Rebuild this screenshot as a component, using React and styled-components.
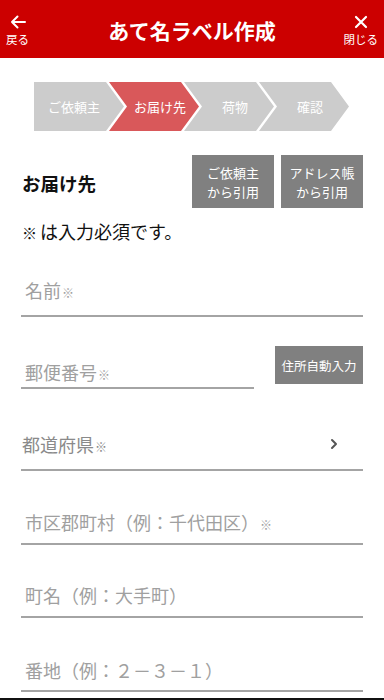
import React from "react";
import styled, { createGlobalStyle } from "styled-components";

const Global = createGlobalStyle`
  html, body { margin: 0; padding: 0; background: #fff; }
  body { font-family: "Noto Sans CJK JP", "Noto Sans", sans-serif; }
  * { box-sizing: border-box; }
`;

const Page = styled.div`
  width: 384px;
  display: flex;
  flex-direction: column;
`;

const Header = styled.header`
  height: 58px;
  background: #cc0000;
  display: grid;
  grid-template-columns: 1fr auto 1fr;
  align-items: center;
  padding: 0 6px;
  color: #fff;
`;

const NavButton = styled.div`
  justify-self: ${(p) => (p.$right ? "end" : "start")};
  display: flex;
  flex-direction: column;
  align-items: center;
  gap: 4px;
  padding-top: 2px;
  font-size: 11.5px;
  line-height: 13px;
`;

const Title = styled.h1`
  margin: 0;
  font-size: 21px;
  font-weight: 700;
  line-height: 28px;
  padding-top: 2px;
`;

const Steps = styled.div`
  display: flex;
  margin-top: 24px;
  padding-left: 34px;
`;

const Step = styled.div`
  width: 90px;
  height: 49px;
  margin-left: ${(p) => (p.$first ? "0" : "-15px")};
  background: ${(p) => (p.$active ? "#d9585a" : "#cccccc")};
  color: #fff;
  font-size: 13px;
  display: flex;
  align-items: center;
  justify-content: center;
  padding-left: ${(p) => (p.$first ? "0" : "12px")};
  padding-right: ${(p) => (p.$first ? "10px" : "0")};
  clip-path: ${(p) =>
    p.$first
      ? "polygon(0 0, 72px 0, 90px 50%, 72px 100%, 0 100%)"
      : "polygon(0 0, 72px 0, 90px 50%, 72px 100%, 0 100%, 18px 50%)"};
`;

const SectionRow = styled.div`
  display: flex;
  align-items: center;
  margin-top: 24px;
  padding: 0 21px 0 22px;
`;

const SectionTitle = styled.h2`
  margin: 0;
  flex: 1;
  font-size: 18.5px;
  font-weight: 700;
  color: #111;
  padding-top: 2px;
`;

const QuoteButton = styled.button`
  width: 82px;
  height: 53px;
  margin-left: 7px;
  border: none;
  background: #808080;
  color: #fff;
  font-family: inherit;
  font-size: 13px;
  line-height: 19px;
  padding: 0;
  display: flex;
  flex-direction: column;
  align-items: center;
  justify-content: center;
`;

const ButtonLine = styled.span`
  display: block;
`;

const Note = styled.p`
  margin: 11px 0 0;
  padding-left: 22px;
  font-size: 18px;
  line-height: 24px;
  height: 24px;
  color: #111;
`;

const NoteMark = styled.span`
  font-size: 15px;
  line-height: 1;
  margin-right: 3px;
`;

const Form = styled.div`
  display: flex;
  flex-direction: column;
  padding: 0 21px;
`;

const Row = styled.div`
  display: flex;
  justify-content: space-between;
  align-items: flex-start;
  margin-top: ${(p) => p.$mt}px;
`;

const Field = styled.div`
  height: 44px;
  width: ${(p) => p.$w || "100%"};
  margin-top: ${(p) => p.$mt || 0}px;
  border-bottom: 2px solid #a4a4a4;
  display: flex;
  align-items: flex-end;
  justify-content: space-between;
  padding-bottom: ${(p) => p.$pb}px;
  padding-left: ${(p) => (p.$select ? 1 : 4)}px;
  padding-right: 24px;
`;

const Placeholder = styled.span`
  font-size: 18px;
  line-height: 24px;
  height: 24px;
  color: ${(p) => (p.$dark ? "#8a8a8a" : "#a0a0a0")};
  white-space: nowrap;
`;

const Mark = styled.span`
  font-size: 12px;
  line-height: 1;
  margin-left: 1px;
`;

const Chevron = styled.svg`
  width: 10px;
  height: 24px;
  display: block;
`;

const AutoButton = styled.button`
  width: 88px;
  height: 38px;
  margin-top: 1px;
  border: none;
  background: #808080;
  color: #fff;
  font-family: inherit;
  font-size: 12.5px;
  padding: 0;
`;

const Footer = styled.div`
  height: 4px;
  margin-top: 6px;
  background: #111;
`;

export default function App() {
  return (
    <Page>
      <Global />
      <Header>
        <NavButton>
          <svg width="16" height="14" viewBox="0 0 16 14" fill="none" stroke="#fff" strokeWidth="2" strokeLinecap="round" strokeLinejoin="round">
            <path d="M15 7H2M7.5 1.5L2 7l5.5 5.5" />
          </svg>
          <span>戻る</span>
        </NavButton>
        <Title>あて名ラベル作成</Title>
        <NavButton $right>
          <svg width="14" height="14" viewBox="0 0 14 14" fill="none" stroke="#fff" strokeWidth="2.2" strokeLinecap="round">
            <path d="M2 2l10 10M12 2L2 12" />
          </svg>
          <span>閉じる</span>
        </NavButton>
      </Header>

      <Steps>
        <Step $first>ご依頼主</Step>
        <Step $active>お届け先</Step>
        <Step>荷物</Step>
        <Step>確認</Step>
      </Steps>

      <SectionRow>
        <SectionTitle>お届け先</SectionTitle>
        <QuoteButton>
          <ButtonLine>ご依頼主</ButtonLine>
          <ButtonLine>から引用</ButtonLine>
        </QuoteButton>
        <QuoteButton>
          <ButtonLine>アドレス帳</ButtonLine>
          <ButtonLine>から引用</ButtonLine>
        </QuoteButton>
      </SectionRow>

      <Note><NoteMark>※</NoteMark>は入力必須です。</Note>

      <Form>
        <Field $mt={30} $pb={13}>
          <Placeholder>名前<Mark>※</Mark></Placeholder>
        </Field>
        <Row $mt={28}>
          <Field $w="233px" $pb={3}>
            <Placeholder>郵便番号<Mark>※</Mark></Placeholder>
          </Field>
          <AutoButton>住所自動入力</AutoButton>
        </Row>
        <Field $mt={38} $pb={13} $select>
          <Placeholder $dark>都道府県<Mark>※</Mark></Placeholder>
          <Chevron viewBox="0 0 10 24" fill="none" stroke="#555" strokeWidth="2" strokeLinecap="round" strokeLinejoin="round">
            <path d="M3 8l4 4-4 4" />
          </Chevron>
        </Field>
        <Field $mt={30} $pb={9}>
          <Placeholder>市区郡町村（例：千代田区）<Mark>※</Mark></Placeholder>
        </Field>
        <Field $mt={29} $pb={9}>
          <Placeholder>町名（例：大手町）</Placeholder>
        </Field>
        <Field $mt={30} $pb={8}>
          <Placeholder>番地（例：２－３－１）</Placeholder>
        </Field>
      </Form>
      <Footer />
    </Page>
  );
}
